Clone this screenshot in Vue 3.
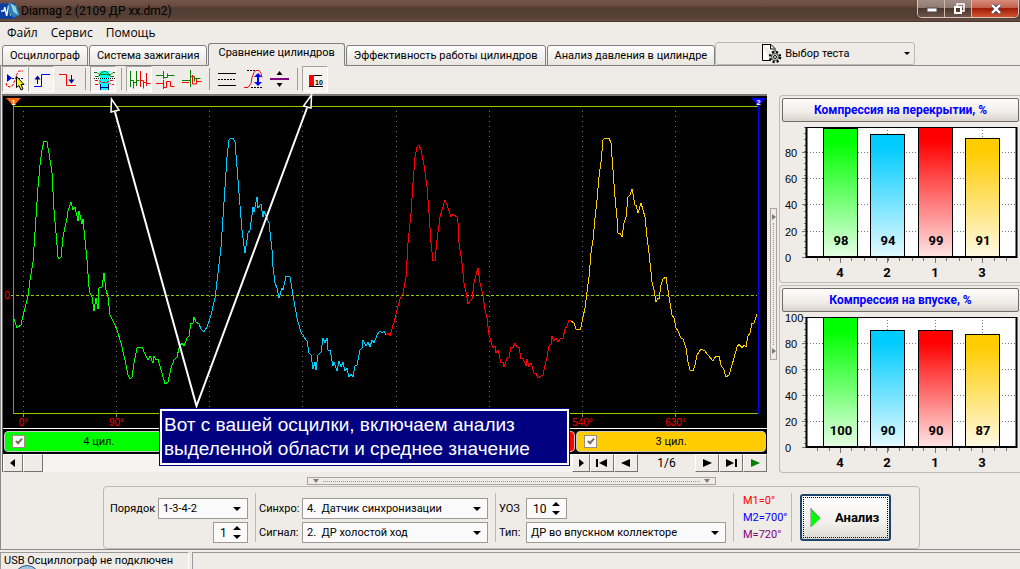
<script setup>
import { ref } from 'vue'

const menus = ['Файл', 'Сервис', 'Помощь']
const tabs = [
  'Осциллограф',
  'Система зажигания',
  'Сравнение цилиндров',
  'Эффективность работы цилиндров',
  'Анализ давления в цилиндре',
]
const activeTab = ref(2)

const traces = [
  {
    color: '#00ff00',
    points:
      '14,319 17,328 21,325 23,316 28,296 30,280 33,262 36,217 38,187 40,165 42,150 44,141 47,142 49,153 52,173 54,210 56,233 58,257 59,259 61,257 63,237 67,218 68,211 71,202 73,210 75,207 78,221 79,211 82,224 83,219 85,240 87,260 89,287 90,293 92,297 94,311 96,298 98,309 99,288 102,287 104,273 106,290 108,297 110,315 115,325 117,330 121,343 125,360 128,375 130,379 132,377 134,363 137,348 142,347 145,354 148,360 150,356 153,363 154,356 156,360 158,359 162,373 165,384 168,382 171,368 174,360 177,357 179,348 182,343 184,346 187,338 189,336 191,323 193,323 194,317 196,322 199,324',
  },
  {
    color: '#00ccff',
    points:
      '199,324 201,329 204,332 207,327 211,315 215,298 218,273 221,247 223,217 225,187 227,157 229,140 231,138 233,138 235,142 237,167 239,193 242,230 243,238 245,253 248,233 250,230 253,207 254,212 257,197 258,208 261,204 263,217 264,211 269,223 272,250 273,267 275,283 277,288 279,298 282,288 283,290 286,276 290,277 293,295 297,318 301,332 304,337 307,341 309,353 311,355 313,369 315,362 316,370 318,355 321,352 323,338 325,343 327,338 328,350 330,350 333,366 334,362 337,371 339,361 341,367 343,362 345,371 347,368 349,377 351,374 353,377 355,366 357,365 360,350 362,348 363,340 366,346 368,342 370,347 372,340 374,343 377,335 380,331 382,333 384,331 386,335',
  },
  {
    color: '#ff0000',
    points:
      '386,335 388,333 390,336 393,325 394,323 397,310 400,299 403,293 406,277 408,243 411,213 413,183 415,157 417,147 419,145 421,150 424,165 427,187 429,213 431,243 433,261 435,260 437,240 439,225 440,217 442,210 445,200 448,208 451,217 453,214 457,217 458,223 459,243 462,263 464,283 466,292 468,304 470,301 472,299 474,283 476,275 478,268 480,283 483,295 485,310 487,318 489,335 493,348 495,346 496,353 498,350 501,363 503,362 504,367 507,358 509,357 511,347 513,348 515,343 517,347 519,347 521,359 523,358 526,366 527,359 529,367 531,363 534,373 536,373 538,378 541,376 543,375 545,365 547,357 549,346 551,344 552,336 554,341 556,338 558,342 561,338 563,338 565,329 567,326 569,320 571,321',
  },
  {
    color: '#ffcc00',
    points:
      '571,321 574,323 576,329 580,330 581,327 583,317 585,308 587,292 589,277 591,253 593,240 595,218 597,200 599,177 601,162 603,140 605,138 609,138 611,143 613,170 615,197 617,218 618,233 620,233 622,237 624,223 626,217 628,197 630,195 632,189 635,205 636,205 638,213 641,203 643,210 645,217 647,237 649,253 652,282 654,290 656,302 658,298 659,299 661,285 663,279 666,277 669,297 672,315 674,318 676,328 678,331 681,338 683,339 686,348 688,362 690,370 693,371 695,365 697,355 701,349 705,351 708,355 713,361 716,356 719,356 721,365 724,370 726,377 729,375 732,365 734,358 737,347 739,344 742,348 744,345 746,347 748,336 750,333 752,323 754,323 757,314',
  },
]
const gridLines = [0, 90, 180, 270, 360, 450, 540, 630].map((deg, i) => ({
  deg,
  x: 23.5 + Math.round(i * 93.15),
}))
// degrees between 180 and 450 lie under the callout and carry no label
const labelledLines = gridLines.filter((g) => g.deg < 180 || g.deg > 450)

const cylinders = ref([
  { number: 4, tone: 'green', on: true, label: '4 цил.' },
  { number: 2, tone: 'cyan', on: true, label: '' },
  { number: 1, tone: 'red', on: true, label: '' },
  { number: 3, tone: 'yellow', on: true, label: '3 цил.' },
])

const barColors = ['#00ff00', '#00ccff', '#ff0000', '#ffcc00']
const cylinderOrder = ['4', '2', '1', '3']
const barLeft = [43, 90, 138, 185]
const charts = [
  { title: 'Компрессия на перекрытии, %', values: [98, 94, 99, 91], max: 99, ticks: [0, 20, 40, 60, 80] },
  { title: 'Компрессия на впуске, %', values: [100, 90, 90, 87], max: 100, ticks: [0, 20, 40, 60, 80, 100] },
]
const yOf = (chart, v) => Math.round(135 - (v / chart.max) * 130) + 0.5

const minorX = [37.5, 49.5, 71.5, 84.5, 96.5, 108.5, 119.5, 132.5, 143.5, 155.5, 166.5, 179.5, 191.5, 214.5, 226.5]
</script>

<template>
  <div class="window">
    <header class="title-bar">
      <svg class="app-icon" viewBox="0 0 22 22" aria-hidden="true">
        <rect x="0" y="3" width="16" height="16" fill="#0a3fa8" />
        <path d="M1 11h3l1-4 2 9 2-11 2 9 1-3h3" fill="none" stroke="#fff" stroke-width="1.4" />
        <path d="M9 2l8 3 4 10-7 3-5-6z" fill="#2a7fae" />
        <path d="M11 3l5 3 3 9-5-3z" fill="#8fd0e8" />
      </svg>
      <span class="title">Diamag 2 (2109 ДР xx.dm2)</span>
      <div class="window-buttons">
        <button class="wb" aria-label="Свернуть">
          <svg width="12" height="12" viewBox="0 0 12 12"><rect x="1" y="5" width="10" height="4" fill="#fff" stroke="#444a5c" /></svg>
        </button>
        <button class="wb" aria-label="Развернуть">
          <svg width="12" height="12" viewBox="0 0 12 12">
            <path d="M4 3V1h7v7H9" fill="none" stroke="#fff" stroke-width="1.5" />
            <rect x="2" y="4" width="6" height="6" fill="none" stroke="#fff" stroke-width="2" />
          </svg>
        </button>
        <button class="wb close" aria-label="Закрыть">
          <svg width="12" height="12" viewBox="0 0 12 12">
            <path d="M2 2l8 8M10 2l-8 8" stroke="#4a4a5c" stroke-width="4" />
            <path d="M2 2l8 8M10 2l-8 8" stroke="#fff" stroke-width="2.4" />
          </svg>
        </button>
      </div>
    </header>

    <nav class="menu">
      <button v-for="m in menus" :key="m" class="menu-item">{{ m }}</button>
    </nav>

    <div class="tabs-row">
      <div class="tabs" role="tablist">
        <button
          v-for="(t, i) in tabs"
          :key="t"
          class="tab"
          :class="{ active: i === activeTab }"
          role="tab"
          :aria-selected="i === activeTab"
          @click="activeTab = i"
        >{{ t }}</button>
      </div>
      <button class="test-button">
        <svg width="22" height="22" viewBox="0 0 22 22" aria-hidden="true">
          <path d="M1.500 2v15.500h8M1 1.500h9l4 4v5M9.500 2v4h4" fill="#fff" stroke="#000" />
          <circle cx="14" cy="14" r="5" fill="#cfe0d4" stroke="#000" stroke-width="2.500" stroke-dasharray="2 2" />
          <circle cx="14" cy="14" r="3.500" fill="none" stroke="#555" />
          <circle cx="14" cy="14" r="1.500" fill="#fff" stroke="#000" />
        </svg>
        <span>Выбор теста</span>
        <i class="caret"></i>
      </button>
    </div>

    <div class="toolbar" role="toolbar">
      <button class="tool pressed" aria-label="Маркер">
        <svg viewBox="0 0 26 26">
          <path d="M5 8v8l5-4z" fill="#00f" />
          <path d="M10 12.500h11" stroke="#00f" stroke-dasharray="2 1" />
          <path d="M4 17l1 3 3 1 3-2 2-5 2-6 2-3h4" fill="none" stroke="#f00" stroke-dasharray="3 1" />
          <path d="M14.500 10.500v11l2.500-2 2 4.500 2-1-2-4.500h3z" fill="#ff0" stroke="#000" />
        </svg>
      </button>
      <button class="tool pressed" aria-label="Передний фронт">
        <svg viewBox="0 0 26 26">
          <path d="M6 20.500h7.500v-12H22" fill="none" stroke="#00f" />
          <path d="M9.500 18v-6" stroke="#000080" />
          <path d="M6.500 13.500h6l-3-4z" fill="#000080" />
        </svg>
      </button>
      <button class="tool" aria-label="Задний фронт">
        <svg viewBox="0 0 26 26">
          <path d="M5 8.500h7.500v11H22" fill="none" stroke="#f00" />
          <path d="M17.500 9v6" stroke="#000080" />
          <path d="M14.500 13.500h6l-3 4z" fill="#000080" />
        </svg>
      </button>
      <i class="sep"></i>
      <button class="tool pressed" aria-label="Анализ выделенной области">
        <svg viewBox="0 0 26 26">
          <path d="M10 5h9v19h-9z" fill="#0ff" />
          <path d="M4 6.500h3l2 2 3-2 2-1h2l3 3h2l2-2h2M5 10.500h3l3-2h7l3 2h3" fill="none" stroke="#008000" />
          <path d="M4 12.500h21" stroke="#000" stroke-dasharray="1 1" />
          <path d="M5 14.500h4l3 2h5l3-2h4M5 18.500h3l2-2M19 16.500l2 2h3" fill="none" stroke="#f00" stroke-dasharray="3 1" />
          <path d="M10.500 18v6M18.500 18v6M11 21.500h7" stroke="#000080" />
        </svg>
      </button>
      <i class="sep"></i>
      <button class="tool pressed" aria-label="Последовательно">
        <svg viewBox="0 0 26 26">
          <path d="M4.500 5v16M4.500 14.500h3v8M7.500 16.500h3M10.500 5v15M10.500 14.500h3" fill="none" stroke="#008000" />
          <path d="M14.500 5v16M14.500 14.500h3v8M17.500 16.500h3M20.500 7v13M20.500 17.500h4" fill="none" stroke="#f00" />
        </svg>
      </button>
      <button class="tool" aria-label="Друг под другом">
        <svg viewBox="0 0 26 26">
          <path d="M4 9.500h7.500M11.500 5v8M11.500 11.500h4v-4M15.500 9.500h7" fill="none" stroke="#008000" />
          <path d="M4 17.500h7.500M11.500 14v9M11.500 21.500h3v-6h4v5h4" fill="none" stroke="#f00" />
        </svg>
      </button>
      <button class="tool" aria-label="Наложение">
        <svg viewBox="0 0 26 26">
          <path d="M4 14.500h8M12.500 4v17M12.500 10.500h4v5M16.500 12.500h6" fill="none" stroke="#008000" />
          <path d="M4 16.500h7M14.500 9v9h4v-5M18.500 15.500h5" fill="none" stroke="#f00" />
        </svg>
      </button>
      <i class="sep"></i>
      <button class="tool" aria-label="Линии">
        <svg viewBox="0 0 26 26">
          <path d="M4 7.500h18M4 19.500h18" stroke="#000" />
          <path d="M4 13.500h18" stroke="#000" stroke-dasharray="2 1" />
        </svg>
      </button>
      <button class="tool" aria-label="Размах">
        <svg viewBox="0 0 26 26">
          <path d="M7 4.500h9M11 21.500h11" stroke="#000" stroke-dasharray="2 1" />
          <path d="M4 21.500h4l3-4 1-6 2-5 2-2h3l2 3 1 4" fill="none" stroke="#f00" />
          <path d="M18 9v8" stroke="#00f" stroke-width="2" />
          <path d="M14 11h8l-4-4zM14 16h8l-4 4z" fill="#00f" />
        </svg>
      </button>
      <button class="tool" aria-label="Среднее положение">
        <svg viewBox="0 0 26 26">
          <path d="M4 13h19" stroke="#800080" stroke-width="2" />
          <path d="M10.500 9h6l-3-4zM10.500 17h6l-3 4z" fill="#000" />
        </svg>
      </button>
      <i class="sep"></i>
      <button class="tool pressed" aria-label="Среднее значение">
        <svg viewBox="0 0 26 26">
          <path d="M7 9h5v11H7z" fill="#f00" />
          <path d="M7 20.500h14M12 9.500h8" stroke="#000" />
          <text x="13" y="19" class="icon-text">10</text>
        </svg>
      </button>
    </div>

    <main class="main">
      <section class="scope">
        <svg class="plot" viewBox="3 96 764 332">
          <g stroke="#777" stroke-dasharray="1 4">
            <path v-for="g in gridLines" :key="g.deg" :d="`M${g.x} 111V413`" />
          </g>
          <path d="M11 295.500H757" stroke="#99cc00" stroke-dasharray="3 2" />
          <path d="M14 106.500H758M14 413.500H758" stroke="#99cc00" />
          <path v-for="g in gridLines" :key="g.deg" :d="`M${g.x} 414v3`" stroke="#888" />
          <polyline
            v-for="t in traces"
            :key="t.color"
            :points="t.points"
            :stroke="t.color"
            fill="none"
            shape-rendering="crispEdges"
          />
          <path d="M13.500 104V414" stroke="#ff6600" />
          <path d="M6 98h15l-7.500 8z" fill="#ff6600" />
          <path d="M758.500 104V414" stroke="#0000ff" stroke-width="1.500" />
          <path d="M751 98h15l-7.500 8z" fill="#0000ff" />
          <text x="13.500" y="105" class="marker">1</text>
          <text x="758.500" y="105" class="marker">2</text>
          <text x="7" y="299" class="axis">0</text>
          <text v-for="g in labelledLines" :key="g.deg" :x="g.x" y="426" class="axis">{{ g.deg }}°</text>
          <g fill="none" stroke="#fff" stroke-width="2">
            <path d="M115 112L196.500 406L307 108" />
            <path d="M111.500 99L111 112L119 110zM311.500 95L303.500 106L311 108z" stroke-width="1.500" fill="#000" />
          </g>
        </svg>
        <div class="cylinders">
          <label v-for="c in cylinders" :key="c.number" class="cylinder" :class="c.tone">
            <input v-model="c.on" type="checkbox" class="check" :aria-label="`Цилиндр ${c.number}`" />
            <span v-if="c.label">{{ c.label }}</span>
          </label>
        </div>
        <div class="callout">Вот с вашей осцилки, включаем анализ выделенной области и среднее значение</div>
        <div class="pager">
          <button class="pg step" aria-label="Прокрутить влево"><svg viewBox="0 0 16 12"><path d="M10 2v8L5 6z" /></svg></button>
          <button class="pg thumb" aria-label="Ползунок"></button>
          <div class="track"></div>
          <button class="pg step narrow" aria-label="Прокрутить вправо"><svg viewBox="0 0 16 12"><path d="M6 2v8l5-4z" /></svg></button>
          <button class="pg" aria-label="Первый"><svg viewBox="0 0 16 12"><path d="M2 2h2v8H2zM13 2v8L5 6z" /></svg></button>
          <button class="pg" aria-label="Предыдущий"><svg viewBox="0 0 16 12"><path d="M12 2v8L3 6z" /></svg></button>
          <span class="page">1/6</span>
          <button class="pg" aria-label="Следующий"><svg viewBox="0 0 16 12"><path d="M4 2v8l9-4z" /></svg></button>
          <button class="pg" aria-label="Последний"><svg viewBox="0 0 16 12"><path d="M3 2v8l8-4zM12 2h2v8h-2z" /></svg></button>
          <button class="pg play" aria-label="Пуск"><svg viewBox="0 0 16 12"><path d="M4 2v8l9-4z" /></svg></button>
        </div>
      </section>

      <div class="v-split"><i class="mini right"></i><i class="dots-v"></i><i class="mini right"></i></div>

      <aside class="charts">
        <section v-for="(c, ci) in charts" :key="c.title" class="chart">
          <button class="chart-title">{{ c.title }}</button>
          <svg viewBox="0 0 240 160">
            <defs>
              <linearGradient v-for="(col, i) in barColors" :id="`g${ci}${i}`" :key="col" x1="0" y1="0" x2="0" y2="1">
                <stop offset="0" :stop-color="col" />
                <stop offset="0.1" :stop-color="col" />
                <stop offset="1" :stop-color="col" stop-opacity="0.1" />
              </linearGradient>
            </defs>
            <rect x="27" y="5" width="210" height="130" fill="#fff" />
            <g stroke="#777" stroke-dasharray="1 2">
              <path v-for="t in c.ticks.slice(1)" :key="t" :d="`M27 ${yOf(c, t)}H237`" />
              <path v-for="x in barLeft" :key="x" :d="`M${x + 17.5} 5V135`" />
            </g>
            <g stroke="#777">
              <path v-for="t in c.ticks" :key="t" :d="`M22 ${yOf(c, t)}h5`" />
              <path d="M25 5V135" stroke-width="2" stroke-dasharray="1 5" />
              <path v-for="x in minorX" :key="x" :d="`M${x} 136v3`" />
              <path v-for="x in barLeft" :key="x" :d="`M${x + 17.5} 136v5`" />
            </g>
            <g v-for="(v, i) in c.values" :key="i">
              <rect :x="barLeft[i] + 0.5" :y="yOf(c, v)" width="34" :height="135.5 - yOf(c, v)" fill="#fff" />
              <rect
                :x="barLeft[i] + 0.5"
                :y="yOf(c, v)"
                width="34"
                :height="135.5 - yOf(c, v)"
                :fill="`url(#g${ci}${i})`"
                stroke="#000"
              />
              <text :x="barLeft[i] + 18" y="123" class="value">{{ v }}</text>
              <text :x="barLeft[i] + 17" y="155" class="category">{{ cylinderOrder[i] }}</text>
            </g>
            <path d="M27 5.500H236" stroke="#000" />
            <path d="M26 135H237M26.500 5V136M236.500 5V136" stroke="#000" stroke-width="2" />
            <text v-for="t in c.ticks" :key="t" x="5" :y="yOf(c, t) + 4" class="tick">{{ t }}</text>
          </svg>
        </section>
      </aside>
    </main>

    <footer class="bottom">
      <div class="h-split"><i class="mini down"></i><i class="dots-h"></i><i class="mini down"></i></div>
      <form class="settings" @submit.prevent>
        <div class="fields order">
          <label for="order">Порядок</label>
          <div class="combo"><select id="order"><option>1-3-4-2</option></select></div>
          <div class="spin second"><input type="text" value="1" aria-label="Номер цилиндра" /><i class="arrows"></i></div>
        </div>
        <i class="divider"></i>
        <div class="fields sync">
          <label for="sync">Синхро:</label>
          <div class="combo"><select id="sync"><option>4.&nbsp; Датчик синхронизации</option></select></div>
          <label for="signal">Сигнал:</label>
          <div class="combo"><select id="signal"><option>2.&nbsp; ДР холостой ход</option></select></div>
        </div>
        <i class="divider"></i>
        <div class="fields kind">
          <label for="uoz">УОЗ</label>
          <div class="spin"><input id="uoz" type="text" value="10" /><i class="arrows"></i></div>
          <label for="kind">Тип:</label>
          <div class="combo"><select id="kind"><option>ДР во впускном коллекторе</option></select></div>
        </div>
        <i class="divider"></i>
        <div class="markers">
          <span class="m1">M1=0°</span>
          <span class="m2">M2=700°</span>
          <span class="m">M=720°</span>
        </div>
        <i class="divider"></i>
        <button class="analyze">
          <svg width="12" height="20" viewBox="0 0 12 20" aria-hidden="true">
            <path d="M1.500 1v18l9-9z" fill="#00ff00" />
            <path d="M1 0v19M1 1l9 9" stroke="#777" fill="none" />
          </svg>
          <span>Анализ</span>
        </button>
      </form>
    </footer>

    <div class="status">
      <span class="status-text">USB Осциллограф не подключен</span>
      <span class="status-rest"></span>
      <i class="orb"></i>
    </div>
  </div>
</template>

<style>
body {
  background: #efebe7;
}
</style>

<style scoped>
.window {
  display: flex;
  flex-direction: column;
  min-height: 100vh;
  box-sizing: border-box;
  overflow: hidden;
  background: #efebe6;
  color: #000;
  font: 11px/14px "Roboto", "Liberation Sans", sans-serif;
}
.window *,
.window *::before,
.window *::after {
  box-sizing: border-box;
}
button,
select,
input {
  font: inherit;
  color: inherit;
  margin: 0;
  padding: 0;
}
.title-bar {
  display: flex;
  height: 22px;
  background: linear-gradient(#755549 0, #6a4a3f 6px, #523c32 8px, #584237 19px, #6d5347 20px, #3c2c26 22px);
}
.app-icon {
  width: 21px;
  height: 22px;
}
.title {
  flex: 1;
  font: 12px/22px "Roboto", sans-serif;
}
.window-buttons {
  display: flex;
  height: 18px;
  margin-right: 1px;
  border: 1px solid #d3c5be;
  border-top: 0;
  border-radius: 0 0 5px 5px;
  overflow: hidden;
}
.wb {
  display: grid;
  place-items: center;
  width: 27px;
  padding-left: 2px;
  border: 0;
  border-right: 1px solid #cbbab2;
  background: linear-gradient(#a18e85 0, #907a70 45%, #4c352c 50%, #6e5549);
}
.wb.close {
  width: 46px;
  border-right: 0;
  background: linear-gradient(#d68d7c 0, #c4604a 45%, #a01c06 50%, #cf5530);
}
.menu {
  display: flex;
  height: 21px;
  padding-left: 7px;
  gap: 13px;
}
.menu-item {
  border: 0;
  background: none;
  font: 12px/20px "Open Sans", sans-serif;
}
.tabs-row {
  display: flex;
  align-items: flex-end;
  height: 23px;
  border-bottom: 1px solid #8a8a88;
}
.tabs {
  display: flex;
  align-items: flex-end;
  gap: 1px;
  padding-left: 2px;
  margin-bottom: -1px;
}
.tab {
  height: 21px;
  padding: 0 7px;
  border: 1px solid #808080;
  border-radius: 3px 3px 0 0;
  background: linear-gradient(#fefefe, #e9e5df);
  white-space: nowrap;
}
.tab.active {
  height: 23px;
  padding: 0 9px 3px;
  border-bottom-color: #efebe6;
  background: #efebe6;
}
.test-button {
  display: flex;
  align-items: center;
  flex: 0 1 200px;
  height: 23px;
  padding: 0 4px 0 45px;
  border: 1px solid #bcb9b4;
  border-radius: 3px;
  background: none;
  white-space: nowrap;
}
.test-button span {
  flex: 1;
  padding-left: 2px;
  text-align: left;
}
.caret {
  border: 3px solid transparent;
  border-top: 3px solid #000;
  border-bottom: 0;
}
.toolbar {
  display: flex;
  height: 28px;
  padding-left: 1px;
  border-left: 1px solid #8a8a88;
}
.tool {
  width: 26px;
  height: 26px;
  border: 1px solid transparent;
  background: none;
}
.tool.pressed {
  border-color: #a5a29d #fff #fff #a5a29d;
  background: #f5f2ef;
}
.tool svg {
  display: block;
  width: 26px;
  height: 26px;
  margin: -1px;
}
.icon-text {
  font: bold 7px "Liberation Sans", sans-serif;
}
.sep {
  width: 10px;
  height: 26px;
  background: linear-gradient(#9d9a96, #9d9a96) 5px 2px / 1px 22px no-repeat;
}
.main {
  display: flex;
  align-items: flex-start;
  border-left: 1px solid #8a8a88;
}
.scope {
  position: relative;
  flex: 1;
  min-width: 0;
  margin-left: 1px;
  border-left: 1px solid #666;
  border-top: 2px solid #777;
}
.plot {
  display: block;
  width: 100%;
  background: #000;
  overflow: visible;
}
.marker {
  fill: #fff;
  font: bold 8px "Liberation Sans", sans-serif;
  text-anchor: middle;
}
.axis {
  fill: #ff0000;
  font: 10px "Liberation Sans", sans-serif;
  text-anchor: middle;
}
.cylinders {
  display: flex;
  gap: 1px;
  height: 26px;
  padding: 1px 1px 1px;
  border-top: 1px solid #fff;
  background: #000;
}
.cylinder {
  flex: 1;
  display: flex;
  align-items: center;
  margin: 1px 0;
  border: 1px solid #c8c8c8;
  border-radius: 4px;
}
.cylinder span {
  flex: 1;
  padding-right: 20px;
  text-align: center;
}
.green { background: #00ff00; }
.cyan { background: #00ccff; }
.red { background: #ff0000; }
.yellow { background: #ffcc00; }
.check {
  appearance: none;
  width: 13px;
  height: 13px;
  margin-left: 7px;
  border: 1px solid #9a8f80;
  background: #fbfbf9;
}
.check:checked::before {
  content: "";
  display: block;
  width: 4px;
  height: 7px;
  margin: 1px 0 0 4px;
  border: solid #7b6f5c;
  border-width: 0 2px 2px 0;
  transform: rotate(42deg);
}
.callout {
  position: absolute;
  left: 157px;
  top: 313px;
  width: 409px;
  padding: 2px;
  border: 2px solid #fff;
  outline: 1px solid #000080;
  background: #000080;
  color: #fff;
  font: 19px/24px "Liberation Sans", sans-serif;
}
.pager {
  display: flex;
  height: 18px;
  background: #f6f4f1;
}
.pg {
  display: grid;
  place-items: center;
  width: 24px;
  border: 1px solid;
  border-color: #fff #77736e #77736e #fff;
  background: #efebe6;
}
.pg.step,
.pg.thumb {
  width: 20px;
}
.pg.narrow {
  width: 18px;
}
.pg svg {
  width: 16px;
  height: 12px;
}
.pg.play {
  color: #008000;
}
.pg path {
  fill: currentColor;
}
.track {
  flex: 1;
}
.page {
  width: 57px;
  background: #efebe6;
  font-size: 12px;
  line-height: 18px;
  text-align: center;
}
.v-split {
  display: flex;
  flex-direction: column;
  align-items: center;
  justify-content: space-between;
  align-self: center;
  width: 7px;
  height: 152px;
  margin: 0 2px 0 3px;
  padding: 5px 0;
  border: 1px solid #aaa69f;
}
.mini.right {
  border: 3px solid transparent;
  border-left: 4px solid #857a6a;
  border-right: 0;
}
.mini.down {
  border: 3px solid transparent;
  border-top: 4px solid #857a6a;
  border-bottom: 0;
}
.dots-v {
  flex: 1;
  margin: 3px 0;
  border-left: 1px dotted #999;
}
.dots-h {
  flex: 1;
  margin: 0 4px;
  border-top: 1px dotted #999;
}
.charts {
  display: flex;
  flex-direction: column;
  gap: 2px;
  flex: 0 0 241px;
  margin-top: 1px;
}
.chart {
  padding: 2px 0 0 1px;
  border: 1px solid #bdbab5;
  border-right: 0;
  border-radius: 4px 0 0 4px;
}
.chart svg {
  display: block;
  width: 240px;
  height: 160px;
  margin-left: -1px;
}
.chart-title {
  display: block;
  width: 237px;
  height: 24px;
  margin-left: 1px;
  border: 1px solid #6e6b68;
  border-radius: 2px;
  background: linear-gradient(#fdfdfd, #f0ede9 60%, #d8d3cc);
  color: #0000ff;
  font: bold 12px/20px "Roboto", sans-serif;
}
.value,
.category {
  font: bold 13px "Roboto", sans-serif;
  text-anchor: middle;
}
.tick {
  font: 11px "Liberation Sans", sans-serif;
}
.bottom {
  display: flex;
  flex: 1;
  flex-direction: column;
  align-items: center;
  padding-left: 2px;
  border-left: 1px solid #8a8a88;
  border-bottom: 1px solid #8a8a88;
}
.h-split {
  display: flex;
  align-items: center;
  width: 409px;
  height: 8px;
  margin: 4px 0 1px;
  padding: 0 5px;
  border: 1px solid #aaa69f;
}
.settings {
  display: flex;
  align-items: center;
  width: 817px;
  height: 63px;
  padding: 0 6px;
  border: 1px solid #bdbab5;
  border-radius: 4px;
}
.fields {
  display: grid;
  grid-template-rows: 21px 21px;
  row-gap: 3px;
  align-items: center;
  padding-top: 6px;
}
.order {
  grid-template-columns: 48px 90px;
}
.sync {
  grid-template-columns: 43px 186px;
}
.kind {
  grid-template-columns: 27px 200px;
}
.fields label {
  white-space: nowrap;
}
.second {
  grid-column: 2;
  justify-self: end;
}
.combo {
  position: relative;
  height: 21px;
}
.combo select {
  appearance: none;
  width: 100%;
  height: 21px;
  padding: 0 4px;
  border: 1px solid #9d9a96;
  border-radius: 0;
  background: #fbfbfb;
  color: #000;
}
.combo::after {
  content: "";
  position: absolute;
  right: 7px;
  top: 9px;
  border: 4px solid transparent;
  border-top: 4px solid #000;
  border-bottom: 0;
  pointer-events: none;
}
.spin {
  display: flex;
  align-items: center;
  width: 35px;
  height: 21px;
  padding-right: 6px;
  border: 1px solid #9d9a96;
  background: #fbfbfb;
}
.kind .spin {
  width: 41px;
}
.spin input {
  flex: 1;
  min-width: 0;
  width: 10px;
  padding-left: 6px;
  border: 0;
  background: none;
  font-size: 12px;
}
.arrows {
  display: flex;
  flex-direction: column;
  gap: 5px;
}
.arrows::before,
.arrows::after {
  content: "";
  border: 4px solid transparent;
}
.arrows::before {
  border-top: 0;
  border-bottom: 4px solid #000;
}
.arrows::after {
  border-bottom: 0;
  border-top: 4px solid #000;
}
.divider {
  align-self: stretch;
  width: 1px;
  margin: 6px 3px 6px 7px;
  background: #bdbab5;
}
.markers {
  display: flex;
  flex-direction: column;
  width: 41px;
  margin-left: 6px;
  line-height: 17px;
  white-space: nowrap;
}
.m1 { color: #ff0000; }
.m2 { color: #0000ff; }
.m { color: #800080; }
.analyze {
  display: flex;
  align-items: center;
  gap: 13px;
  width: 91px;
  height: 47px;
  margin-left: 5px;
  padding: 0 8px;
  border: 2px solid #1b4468;
  border-radius: 3px;
  outline: 1px dotted #000;
  outline-offset: -4px;
  background: linear-gradient(#fff, #f3f1ee 60%, #dedad3);
  font-size: 13px;
  font-weight: bold;
}
.status {
  position: relative;
  display: flex;
  gap: 3px;
  height: 19px;
  padding-top: 2px;
  overflow: hidden;
}
.status-text {
  width: 189px;
  padding-left: 3px;
  border-top: 1px solid #999;
  border-right: 1px solid #fff;
  border-left: 1px solid #999;
  font: 11px/16px "Roboto", sans-serif;
  white-space: nowrap;
}
.status-rest {
  flex: 1;
  border-top: 1px solid #999;
  border-left: 1px solid #999;
}
.orb {
  position: absolute;
  left: 14px;
  top: 15px;
  width: 26px;
  height: 26px;
  border: 1px solid #2c5f8a;
  border-radius: 50%;
  background: #9fc4dc;
}
</style>
